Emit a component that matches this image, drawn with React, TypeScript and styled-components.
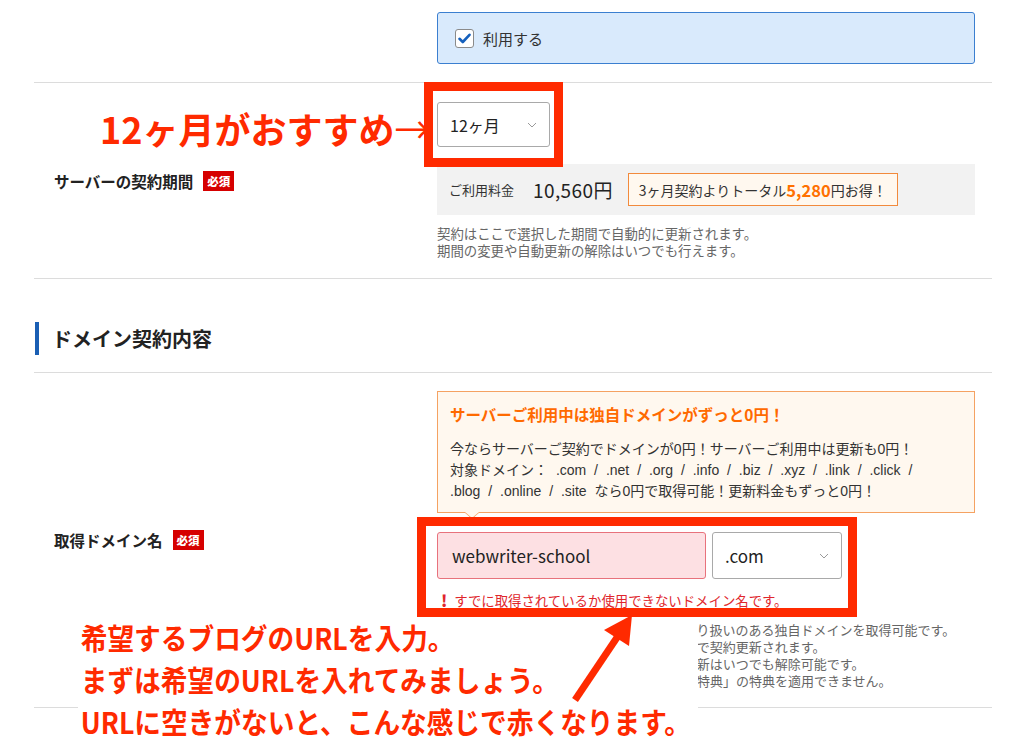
import React from "react";
import styled, { createGlobalStyle } from "styled-components";

const GlobalStyle = createGlobalStyle`
  html, body {
    margin: 0;
    padding: 0;
    background: #fff;
  }
  body {
    font-family: "Noto Sans CJK JP", "Noto Sans", sans-serif;
    color: #333;
  }
  * {
    box-sizing: border-box;
  }
`;

const Page = styled.div`
  position: relative;
  width: 1024px;
  height: 754px;
  overflow: hidden;
  background: #fff;
`;

const Form = styled.div`
  margin-left: 34px;
  width: 958px;
`;

const Row = styled.div<{ $top: number; $bottom: number }>`
  display: grid;
  grid-template-columns: 403px 1fr;
  align-items: center;
  padding: ${(p) => p.$top}px 17px ${(p) => p.$bottom}px 0;
  border-bottom: 1px solid #dcdcdc;
`;

const Label = styled.div`
  display: flex;
  align-items: center;
  gap: 10px;
  padding-left: 20px;
  font-size: 15.5px;
  font-weight: 700;
  color: #222;
`;

const Badge = styled.span`
  display: inline-block;
  height: 20px;
  line-height: 20px;
  padding: 0 4px;
  background: #d60000;
  color: #fff;
  font-size: 11.5px;
  font-weight: 900;
`;

const Field = styled.div`
  display: flex;
  flex-direction: column;
  align-items: flex-start;
`;

const CheckPanel = styled.div`
  width: 100%;
  height: 52px;
  display: flex;
  align-items: center;
  gap: 9px;
  padding-left: 17px;
  background: #d9eafc;
  border: 1px solid #3b7fd0;
  border-radius: 3px;
  font-size: 15px;
  color: #333;
`;

const CheckBox = styled.span`
  width: 19px;
  height: 19px;
  display: flex;
  align-items: center;
  justify-content: center;
  background: #fff;
  border: 1.5px solid #8a8a8a;
  border-radius: 3px;
`;

const Anchor = styled.div`
  position: relative;
`;

const Highlight = styled.div<{ $t: number; $l: number; $w: number; $h: number }>`
  position: absolute;
  top: ${(p) => p.$t}px;
  left: ${(p) => p.$l}px;
  width: ${(p) => p.$w}px;
  height: ${(p) => p.$h}px;
  border: 9px solid #ff2a00;
  pointer-events: none;
`;

const Select = styled.div<{ $w: number; $h: number; $size: number }>`
  width: ${(p) => p.$w}px;
  height: ${(p) => p.$h}px;
  display: flex;
  align-items: center;
  justify-content: space-between;
  padding: 0 12px;
  background: #fff;
  border: 1px solid #a9a9a9;
  border-radius: 3px;
  font-size: ${(p) => p.$size}px;
  color: #222;
`;

const PriceBox = styled.div`
  width: 100%;
  height: 51px;
  margin-top: 17px;
  display: flex;
  align-items: center;
  padding-left: 12px;
  background: #f2f2f2;
`;

const PriceLabel = styled.span`
  font-size: 13px;
  color: #333;
`;

const PriceValue = styled.span`
  margin-left: 19px;
  font-size: 19px;
  letter-spacing: 0.4px;
  color: #222;
`;

const Deal = styled.span`
  margin-left: 15px;
  height: 33px;
  display: flex;
  align-items: center;
  padding: 0 10px;
  background: #fff8ef;
  border: 1px solid #f28a3c;
  font-size: 14px;
  color: #333;
`;

const DealNum = styled.b`
  font-size: 16.5px;
  color: #ff7000;
`;

const Notes = styled.div<{ $top: number; $size: number }>`
  margin-top: ${(p) => p.$top}px;
  font-size: ${(p) => p.$size}px;
  line-height: 17px;
  color: #666;
  white-space: nowrap;
`;

const SectionHead = styled.div`
  margin-top: 43px;
  padding: 0 0 17px 1px;
  border-bottom: 1px solid #dcdcdc;
`;

const SectionTitle = styled.h2`
  margin: 0;
  height: 33px;
  line-height: 33px;
  padding-left: 13px;
  border-left: 4px solid #1a5fb4;
  font-size: 20px;
  font-weight: 700;
  color: #222;
`;

const InfoBox = styled.div`
  position: relative;
  width: 100%;
  padding: 11px 12px 10px;
  background: #fff8ef;
  border: 1px solid #f5a262;

  &::before,
  &::after {
    content: "";
    position: absolute;
    border-style: solid;
    border-color: transparent;
  }
  &::before {
    left: 26px;
    bottom: -7px;
    border-width: 7px 8px 0 8px;
    border-top-color: #f5a262;
  }
  &::after {
    left: 27px;
    bottom: -6px;
    border-width: 6px 7px 0 7px;
    border-top-color: #fff8ef;
  }
`;

const InfoTitle = styled.div`
  font-size: 15.5px;
  font-weight: 700;
  line-height: 22px;
  color: #ff6a00;
  margin-bottom: 14px;
`;

const InfoBody = styled.div`
  font-family: "Liberation Sans", "Noto Sans CJK JP", sans-serif;
  font-size: 14px;
  line-height: 21px;
  word-spacing: 4px;
  color: #333;
  white-space: nowrap;
`;

const InputGroup = styled.div`
  position: relative;
  width: 100%;
  margin-top: 19px;
`;

const InputRow = styled.div`
  display: flex;
  gap: 6px;
`;

const DomainInput = styled.div`
  width: 269px;
  height: 47px;
  display: flex;
  align-items: center;
  padding-left: 14px;
  background: #fde0e3;
  border: 1px solid #e8727c;
  border-radius: 3px;
  font-size: 17px;
  color: #222;
`;

const ErrorText = styled.div`
  margin-top: 12px;
  display: flex;
  align-items: center;
  gap: 7px;
  padding-left: 4px;
  font-size: 13.4px;
  line-height: 18px;
  color: #e0262c;
`;

const ErrorMark = styled.span`
  font-size: 16px;
  font-weight: 900;
  color: #e0262c;
`;

const TopNote = styled.div`
  position: absolute;
  left: 100px;
  top: 107px;
  font-size: 36px;
  line-height: 42px;
  font-weight: 700;
  color: #ff2a00;
  white-space: nowrap;
`;

const ArrowGlyph = styled.span`
  font-weight: 400;
`;

const BottomNote = styled.div`
  position: absolute;
  left: 78px;
  top: 622px;
  width: 620px;
  height: 132px;
  background: #fff;
`;

const NoteLines = styled.div`
  margin-top: -6px;
  padding-left: 3px;
  font-size: 29px;
  line-height: 42px;
  font-weight: 700;
  color: #ff2a00;
  white-space: nowrap;
  transform: scaleX(0.92);
  transform-origin: left center;
`;

const ArrowArt = styled.svg`
  position: absolute;
  left: 560px;
  top: 600px;
  overflow: visible;
`;

function Chevron() {
  return (
    <svg width="10" height="6" viewBox="0 0 10 6">
      <polyline points="1,1 5,5 9,1" fill="none" stroke="#9a9a9a" strokeWidth="1" />
    </svg>
  );
}

export default function App() {
  return (
    <Page>
      <GlobalStyle />
      <Form>
        <Row $top={12} $bottom={18}>
          <div />
          <Field>
            <CheckPanel>
              <CheckBox>
                <svg width="13" height="11" viewBox="0 0 13 11">
                  <path d="M1.5 5.8 L4.8 9 L11.5 1.8" fill="none" stroke="#1560bd" strokeWidth="2.6" strokeLinecap="round" strokeLinejoin="round" />
                </svg>
              </CheckBox>
              利用する
            </CheckPanel>
          </Field>
        </Row>

        <Row $top={19} $bottom={19}>
          <Label>
            サーバーの契約期間<Badge>必須</Badge>
          </Label>
          <Field>
            <Anchor>
              <Select $w={113} $h={45} $size={16}>
                12ヶ月
                <Chevron />
              </Select>
              <Highlight $t={-20} $l={-13} $w={139} $h={85} />
            </Anchor>
            <PriceBox>
              <PriceLabel>ご利用料金</PriceLabel>
              <PriceValue>10,560円</PriceValue>
              <Deal>
                3ヶ月契約よりトータル<DealNum>5,280</DealNum>円お得！
              </Deal>
            </PriceBox>
            <Notes $top={10} $size={13.4}>
              契約はここで選択した期間で自動的に更新されます。
              <br />
              期間の変更や自動更新の解除はいつでも行えます。
            </Notes>
          </Field>
        </Row>

        <SectionHead>
          <SectionTitle>ドメイン契約内容</SectionTitle>
        </SectionHead>

        <Row $top={18} $bottom={18}>
          <Label>
            取得ドメイン名<Badge>必須</Badge>
          </Label>
          <Field>
            <InfoBox>
              <InfoTitle>サーバーご利用中は独自ドメインがずっと0円！</InfoTitle>
              <InfoBody>
                今ならサーバーご契約でドメインが0円！サーバーご利用中は更新も0円！
                <br />
                対象ドメイン： .com / .net / .org / .info / .biz / .xyz / .link / .click /
                <br />
                .blog / .online / .site なら0円で取得可能！更新料金もずっと0円！
              </InfoBody>
            </InfoBox>
            <InputGroup>
              <InputRow>
                <DomainInput>webwriter-school</DomainInput>
                <Select $w={130} $h={47} $size={17}>
                  .com
                  <Chevron />
                </Select>
              </InputRow>
              <ErrorText>
                <ErrorMark>!</ErrorMark>
                すでに取得されているか使用できないドメイン名です。
              </ErrorText>
              <Highlight $t={-15} $l={-20} $w={440} $h={100} />
            </InputGroup>
            <Notes $top={12} $size={13}>
              ※当社が運営する「エックスドメイン」で取り扱いのある独自ドメインを取得可能です。
              <br />
              ・ドメインはサーバーの契約期間と同じ期間で契約更新されます。
              <br />
              ・サーバー契約に合わせたドメインの自動更新はいつでも解除可能です。
              <br />
              ・ドメイン移管の場合は「ドメイン永久無料特典」の特典を適用できません。
            </Notes>
          </Field>
        </Row>
      </Form>

      <TopNote>
        12ヶ月がおすすめ<ArrowGlyph>→</ArrowGlyph>
      </TopNote>

      <BottomNote>
        <NoteLines>
          希望するブログのURLを入力。
          <br />
          まずは希望のURLを入れてみましょう。
          <br />
          URLに空きがないと、こんな感じで赤くなります。
        </NoteLines>
      </BottomNote>

      <ArrowArt width="90" height="110" viewBox="0 0 90 110">
        <line x1="15" y1="100" x2="58" y2="36" stroke="#ff2a00" strokeWidth="7" strokeLinecap="butt" />
        <polygon points="72,15 69,46 44,30" fill="#ff2a00" />
      </ArrowArt>
    </Page>
  );
}
